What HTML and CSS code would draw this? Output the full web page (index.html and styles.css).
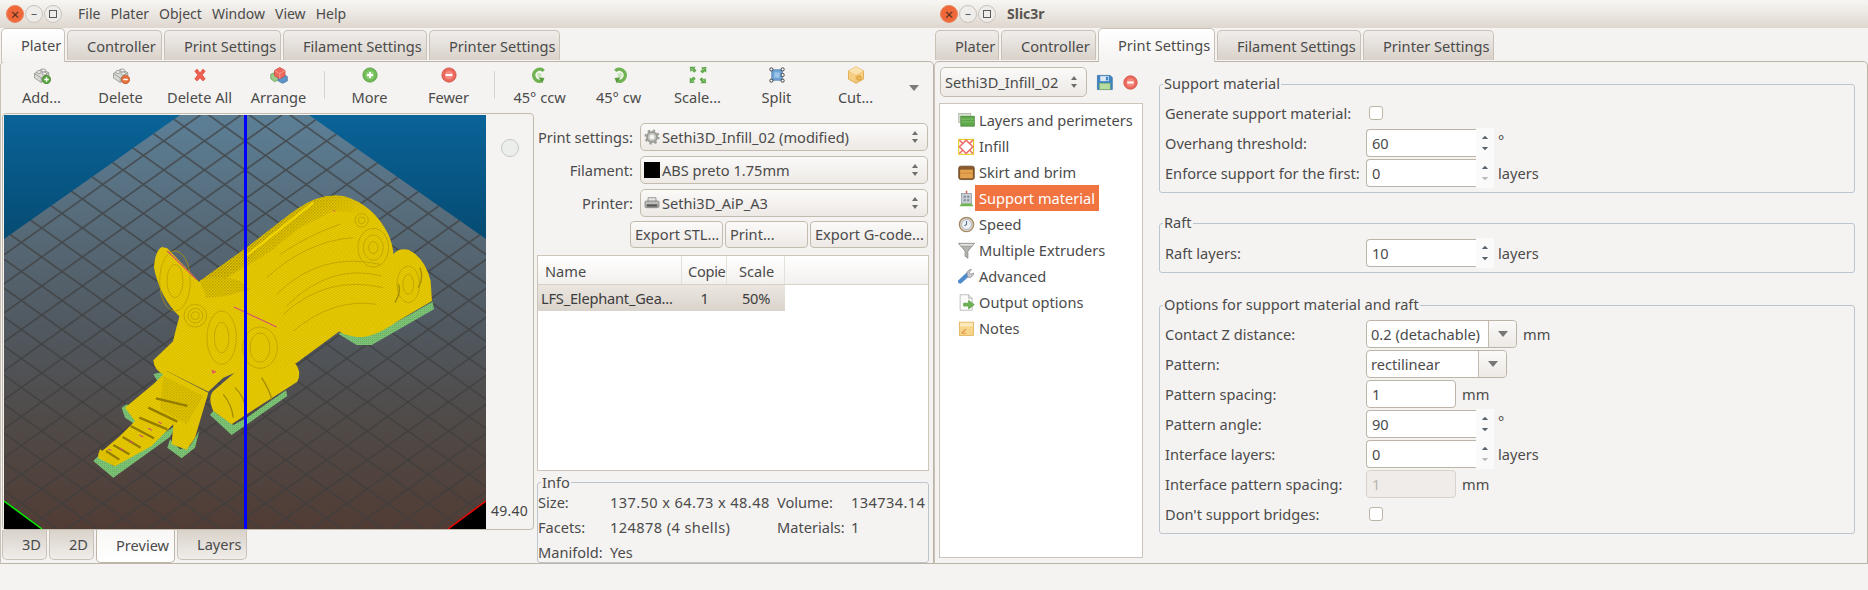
FILE: index.html
```html
<!DOCTYPE html>
<html lang="en">
<head>
<meta charset="utf-8">
<title>Slic3r</title>
<link rel="stylesheet" href="styles.css">
</head>
<body>
<svg class="defs" xmlns="http://www.w3.org/2000/svg">
  <symbol id="i-brick" viewBox="0 0 24 24"><path d="M2 10 12 4l9 5v7l-10 6-9-6z" fill="#d9d9d5" stroke="#8b8b87"/><path d="M2 10l9 6 10-7M11 16v6" fill="none" stroke="#8b8b87"/><ellipse cx="8" cy="8" rx="3" ry="2" fill="#efefec" stroke="#8b8b87"/><ellipse cx="14" cy="6" rx="3" ry="2" fill="#efefec" stroke="#8b8b87"/><ellipse cx="15" cy="10" rx="3" ry="2" fill="#efefec" stroke="#8b8b87"/></symbol>
  <symbol id="i-add" viewBox="0 0 24 24"><use href="#i-brick"/><circle cx="18" cy="18" r="5.5" fill="#58a83e" stroke="#3e7d2b"/><path d="M15 18h6M18 15v6" stroke="#fff" stroke-width="2"/></symbol>
  <symbol id="i-del" viewBox="0 0 24 24"><use href="#i-brick"/><circle cx="18" cy="18" r="5.5" fill="#e8703a" stroke="#b9502a"/><path d="M15 18h6" stroke="#fff" stroke-width="2"/></symbol>
  <symbol id="i-x" viewBox="0 0 24 24"><path d="M5 7l3-3 4 5 4-5 3 3-4 5 4 5-3 3-4-4-4 4-3-3 4-5z" fill="#ee5f52" stroke="#d8463c" stroke-width=".8"/></symbol>
  <symbol id="i-arrange" viewBox="0 0 24 24"><path d="M1 11l7-3 4 3v7l-6 3-5-4z" fill="#9ccb8a" stroke="#5f9a4f"/><path d="M11 14l6-3 6 3v6l-6 3-6-3z" fill="#5f94c8" stroke="#3d6f9f"/><path d="M6 6l7-4 7 4v7l-7 4-7-4z" fill="#ee6a5f" stroke="#c8463c"/><path d="M6 6l7 4 7-4M13 10v7" fill="none" stroke="#f6a49c"/></symbol>
  <symbol id="i-more" viewBox="0 0 24 24"><circle cx="12" cy="12" r="9.5" fill="#72bd58" stroke="#4f983c"/><circle cx="12" cy="12" r="5.5" fill="#92d07c"/><path d="M8 12h8M12 8v8" stroke="#fff" stroke-width="2.6"/></symbol>
  <symbol id="i-fewer" viewBox="0 0 24 24"><circle cx="12" cy="12" r="9.5" fill="#ec6a5c" stroke="#c9473b"/><circle cx="12" cy="12" r="5.5" fill="#f38d80"/><path d="M7.5 12h9" stroke="#fff" stroke-width="2.8"/></symbol>
  <symbol id="i-ccw" viewBox="0 0 24 24"><path d="M17 6.5A8 8 0 1 0 14 20" fill="none" stroke="#6fb352" stroke-width="4.5"/><path d="M10 15l8 1-3 7z" fill="#5a9c40"/><circle cx="11" cy="12" r="3" fill="#c6e6b8"/></symbol>
  <symbol id="i-cw" viewBox="0 0 24 24"><path d="M7 6.5A8 8 0 1 1 10 20" fill="none" stroke="#6fb352" stroke-width="4.5"/><path d="M14 15l-8 1 3 7z" fill="#5a9c40"/><circle cx="13" cy="12" r="3" fill="#c6e6b8"/></symbol>
  <symbol id="i-scale" viewBox="0 0 24 24"><path d="M1 1h8L7 3l3 3-3 3-3-3-2 2zM23 1v8l-2-2-3 3-3-3 3-3-2-2zM1 23v-8l2 2 3-3 3 3-3 3 2 2zM23 23h-8l2-2-3-3 3-3 3 3 2-2z" fill="#5fa84a"/><path d="M3 3l3 3M21 21l-3-3M21 3l-3 3M3 21l3-3" stroke="#b6dfa6"/></symbol>
  <symbol id="i-split" viewBox="0 0 24 24"><path d="M5 5h14v14H5z" fill="#6fa3d6" stroke="#4c7fb1"/><path d="M9 8l7 1-1 7-7-1z" fill="#9cc4e8"/><g fill="#fff" stroke="#111"><rect x="2.5" y="2.500" width="4" height="4" rx="1.500"/><rect x="17.500" y="2.500" width="4" height="4" rx="1.500"/><rect x="2.500" y="17.500" width="4" height="4" rx="1.500"/><rect x="17.500" y="17.500" width="4" height="4" rx="1.500"/><rect x="17.500" y="10" width="4" height="4" rx="1.500"/></g></symbol>
  <symbol id="i-cut" viewBox="0 0 24 24"><path d="M12 1l10 5.500v11L12 23 2 17.500v-11z" fill="#f5cf83" stroke="#dd9f3a"/><path d="M2 6.500L12 12l10-5.500M12 12v11" fill="none" stroke="#e9b45c"/><path d="M12 1l10 5.500L12 12 2 6.500z" fill="#fbe2ae"/><circle cx="16" cy="16" r="3" fill="#eebc54" stroke="#cf8f2c"/></symbol>
  <symbol id="i-gear" viewBox="0 0 24 24"><circle cx="12" cy="12" r="7.500" fill="#c9c9c5" stroke="#9a9a96" stroke-width="3"/><circle cx="12" cy="12" r="9.800" fill="none" stroke="#9a9a96" stroke-width="3" stroke-dasharray="3.500 4.200"/><circle cx="12" cy="12" r="3.500" fill="#f4f4f2"/></symbol>
  <symbol id="i-printer" viewBox="0 0 24 24"><path d="M6 4h12v6H6z" fill="#e4e4e1" stroke="#777"/><rect x="1.500" y="9" width="21" height="10" rx="2" fill="#bdbdb9" stroke="#666"/><rect x="4" y="14" width="16" height="3.500" fill="#555"/></symbol>
  <symbol id="i-save" viewBox="0 0 24 24"><path d="M2 2h18l3 3v17H2z" fill="#3f85c6" stroke="#2e6ba6"/><rect x="6" y="3" width="12" height="7" fill="#dbe9f5"/><rect x="14" y="4" width="3" height="5" fill="#3f85c6"/><rect x="5" y="13" width="15" height="9" fill="#b6dca0" stroke="#7cae63"/></symbol>
  <symbol id="i-layers" viewBox="0 0 24 24"><rect x="1" y="2" width="17" height="13" fill="#d7dfd0" stroke="#a2ad9a"/><rect x="4" y="6" width="19" height="14" fill="#5fa84a" stroke="#3f8030"/><path d="M4 10h19M4 14h19" stroke="#8cc678"/></symbol>
  <symbol id="i-infill" viewBox="0 0 24 24"><rect x="1" y="2" width="21" height="21" fill="#fff" stroke="#e3cb12" stroke-width="1.500"/><path d="M11.500 3l9.500 9.500-9.500 9.500L2 12.500z" fill="none" stroke="#ee6a66" stroke-width="2"/><path d="M2 3l5 5M21 3l-5 5M2 22l5-5M21 22l-5-5" stroke="#ee6a66" stroke-width="2"/></symbol>
  <symbol id="i-skirt" viewBox="0 0 24 24"><rect x="1" y="3" width="22" height="19" rx="3" fill="#8a5a2c" stroke="#5d3a18"/><rect x="3" y="8" width="18" height="12" fill="#e2a24f"/><path d="M3 13h18" stroke="#c98436"/></symbol>
  <symbol id="i-support" viewBox="0 0 24 24"><rect x="5" y="5" width="14" height="15" fill="#c9ced6" stroke="#8b93a0"/><path d="M8 8h3v3H8zM13 8h3v3h-3zM8 13h3v3H8zM13 13h3v3h-3z" fill="#7f8b9b"/><path d="M12 1v4" stroke="#d8584f" stroke-width="2"/><path d="M2 23l3-4h14l3 4z" fill="#6fb352"/></symbol>
  <symbol id="i-speed" viewBox="0 0 24 24"><circle cx="12" cy="12" r="10" fill="#e6dfd2" stroke="#a58a68" stroke-width="2"/><circle cx="12" cy="12" r="7" fill="#eef1f4" stroke="#8fa1b3"/><path d="M12 7v5l-3 2" fill="none" stroke="#4e6d8c" stroke-width="1.500"/></symbol>
  <symbol id="i-funnel" viewBox="0 0 24 24"><path d="M1 2h22l-9 11v10l-4-3v-7z" fill="#b4b4b0" stroke="#7c7c78"/><path d="M1 2h22l-3 4H4z" fill="#e4e4e1" stroke="#8c8c88"/></symbol>
  <symbol id="i-wrench" viewBox="0 0 24 24"><path d="M3 19L14 9" stroke="#4f8ccb" stroke-width="6" stroke-linecap="round"/><path d="M13 10a6 6 0 0 1 6-8l-3 4 2 3 4-2a6 6 0 0 1-8 6z" fill="#c7c9cc" stroke="#86888c"/></symbol>
  <symbol id="i-output" viewBox="0 0 24 24"><path d="M3 1h12l5 5v17H3z" fill="#fbfbfa" stroke="#a9a9a5"/><path d="M15 1v5h5" fill="#e5e5e2" stroke="#a9a9a5"/><path d="M8 13h7V9l8 6-8 6v-4H8z" fill="#6fb352" stroke="#4f983c"/></symbol>
  <symbol id="i-notes" viewBox="0 0 24 24"><rect x="2" y="3" width="20" height="19" fill="#f6d58b" stroke="#dfa74a"/><rect x="3" y="4" width="18" height="5" fill="#fbe9bd"/><path d="M5 19l6-6M11 19l-6-1" stroke="#df8f3a" stroke-width="1.500" fill="none"/></symbol>
  <symbol id="i-updown" viewBox="0 0 10 16"><path d="M5 2l3 4H2zM5 14l3-4H2z" fill="#6f6f6b"/></symbol>
  <symbol id="i-spin" viewBox="0 0 10 22"><path d="M5 2l4 4H1z" fill="#59636d"/><path d="M5 20l4-4H1z" fill="#59636d"/></symbol>
  <symbol id="i-spin-off" viewBox="0 0 10 22"><path d="M5 2l4 4H1z" fill="#59636d"/><path d="M5 20l4-4H1z" fill="#b9b9b5"/></symbol>
</svg>

<main class="desktop">
  <section class="window">
    <header class="titlebar">
      <div class="winbtns">
        <span class="winbtn winbtn-close">×</span><span class="winbtn">–</span><span class="winbtn"><i class="maxbox"></i></span>
      </div>
      <nav class="menubar"><span>File</span><span>Plater</span><span>Object</span><span>Window</span><span>View</span><span>Help</span></nav>
    </header>
    <div class="tabs">
      <span class="tab active w-plater">Plater</span>
      <span class="tab w-controller">Controller</span>
      <span class="tab w-print">Print Settings</span>
      <span class="tab w-filament">Filament Settings</span>
      <span class="tab w-printer">Printer Settings</span>
    </div>
    <div class="panel plater">
      <div class="toolbar">
        <div class="tool"><svg class="tool-icon"><use href="#i-add"/></svg>Add...</div>
        <div class="tool"><svg class="tool-icon"><use href="#i-del"/></svg>Delete</div>
        <div class="tool"><svg class="tool-icon"><use href="#i-x"/></svg>Delete All</div>
        <div class="tool"><svg class="tool-icon"><use href="#i-arrange"/></svg>Arrange</div>
        <div class="tool-sep"></div>
        <div class="tool"><svg class="tool-icon"><use href="#i-more"/></svg>More</div>
        <div class="tool"><svg class="tool-icon"><use href="#i-fewer"/></svg>Fewer</div>
        <div class="tool-sep"></div>
        <div class="tool"><svg class="tool-icon"><use href="#i-ccw"/></svg>45° ccw</div>
        <div class="tool"><svg class="tool-icon"><use href="#i-cw"/></svg>45° cw</div>
        <div class="tool"><svg class="tool-icon"><use href="#i-scale"/></svg>Scale...</div>
        <div class="tool"><svg class="tool-icon"><use href="#i-split"/></svg>Split</div>
        <div class="tool"><svg class="tool-icon"><use href="#i-cut"/></svg>Cut...</div>
        <span class="tool-more"></span>
      </div>
      <div class="plater-body">
        <div class="plater-left">
          <div class="preview">
            <svg class="scene" viewBox="0 0 482 414" xmlns="http://www.w3.org/2000/svg">
              <defs>
                <linearGradient id="sky" x1="0" y1="0" x2="0" y2="1"><stop offset="0" stop-color="#0a6398"/><stop offset=".32" stop-color="#054a70"/><stop offset="1" stop-color="#04344f"/></linearGradient>
                <linearGradient id="plate" gradientUnits="userSpaceOnUse" x1="0" y1="0" x2="0" y2="414"><stop offset="0" stop-color="#5c7f96"/><stop offset=".3" stop-color="#566875"/><stop offset=".55" stop-color="#50565c"/><stop offset=".78" stop-color="#504844"/><stop offset="1" stop-color="#513c35"/></linearGradient>
                <pattern id="grid" patternUnits="userSpaceOnUse" width="40.700" height="29" x="-3" y="-3">
                  <path d="M0 0L40.700 29M40.700 0L0 29" stroke="#3d3d3d" stroke-opacity=".72" stroke-width="1.700" fill="none"/>
                </pattern>
                <pattern id="tex" patternUnits="userSpaceOnUse" width="6" height="6" patternTransform="rotate(-35)">
                  <rect width="6" height="6" fill="#ebce00"/><rect width="6" height="2.200" fill="#d2b500"/>
                </pattern>
                <pattern id="tex2" patternUnits="userSpaceOnUse" width="6" height="6" patternTransform="rotate(30)">
                  <rect width="6" height="6" fill="#ebce00"/><rect width="6" height="2.200" fill="#d0b300"/>
                </pattern>
                <pattern id="tex3" patternUnits="userSpaceOnUse" width="9" height="9">
                  <rect width="9" height="9" fill="#e2c500"/><rect width="4.500" height="4.500" fill="#a08900"/><rect x="4.500" y="4.500" width="4.500" height="4.500" fill="#b59c00"/>
                </pattern>
                <pattern id="raft" patternUnits="userSpaceOnUse" width="6" height="6">
                  <rect width="6" height="6" fill="#7cc274"/><rect width="3" height="3" fill="#69ad64"/>
                </pattern>
                <linearGradient id="backfade" gradientUnits="userSpaceOnUse" x1="600" y1="60" x2="700" y2="190"><stop offset="0" stop-color="#fff" stop-opacity="1"/><stop offset="1" stop-color="#fff" stop-opacity="0"/></linearGradient>
                <mask id="backmask"><rect x="300" width="700" height="500" fill="url(#backfade)"/></mask>
              </defs>
              <rect width="482" height="414" fill="url(#sky)"/>
              <path d="M176 0H305L482 124V386L444 414H38L0 386V124z" fill="url(#plate)"/>
              <path d="M176 0H305L482 124V386L444 414H38L0 386V124z" fill="url(#grid)"/>
              <path d="M0 386L38 414H0z" fill="#000"/>
              <path d="M0 386L38 414" stroke="#00f000" stroke-width="1.500"/>
              <path d="M482 386L444 414H482z" fill="#000"/>
              <path d="M482 386L444 414" stroke="#f00000" stroke-width="1.500"/>
              <g transform="translate(76 76) scale(.3333)">
                <g fill="url(#raft)">
                  <path d="M775 428L830 462L875 462L1062 355L1058 332L1000 365L880 430L800 418z"/>
                  <path d="M390 672L455 732L622 615L618 598L500 680L460 702L400 660z"/>
                  <path d="M40 810L100 860L270 738L292 700L240 735L100 825L60 790z"/>
                  <path d="M125 650L135 680L165 700L195 670L140 640z"/>
                  <path d="M220 550L235 575L260 548L235 545z"/>
                  <path d="M262 770L305 802L345 770L358 720L330 765L300 775L270 745z"/>
                </g>
                <path d="M940 190Q955 170 985 176Q1035 200 1052 270L1056 330L950 392Q880 442 830 438Q790 430 778 422L850 340z" fill="url(#tex2)"/>
                <path d="M245 168L262 172L355 270L366 290L300 378Q240 320 222 230Q225 180 245 168z" fill="url(#tex)"/>
                <path d="M280 450L220 508Q222 540 255 552L290 485z" fill="url(#tex2)"/>
                <path d="M500 530L640 510Q668 540 652 572L570 625L500 670L455 700L400 660Q382 620 400 600L470 540z" fill="url(#tex)"/>
                <path d="M360 270L500 170L650 55Q720 5 790 15Q880 40 925 130Q952 190 935 260L900 310L800 405L650 515L600 532L500 540L450 480L360 400z" fill="url(#tex2)"/>
                <path d="M360 270L500 170L650 55Q720 5 790 15Q840 25 880 70L760 60L660 110L560 190L500 225L440 262z" fill="url(#tex3)" mask="url(#backmask)"/>
                <path d="M360 270L500 170L640 60L500 215L440 262z" fill="url(#tex3)" opacity=".55"/>
                <path d="M498 195L700 35" stroke="#f2d500" stroke-width="7"/>
                <path d="M500 270Q560 310 606 420Q590 480 520 532L500 520z" fill="url(#tex)"/>
                <path d="M360 270Q420 250 480 270L500 285L500 530L430 560L385 602L260 540Q280 440 300 370Q320 300 360 270z" fill="url(#tex)"/>
                <path d="M360 272Q420 250 480 270L510 295L440 315L380 320z" fill="url(#tex3)" opacity=".6"/>
                <path d="M260 540L225 575L135 650L165 690L120 735L55 790L55 802L105 826L215 765L280 700L275 760L320 776L345 740L385 605z" fill="url(#tex2)"/>
                <path d="M250 555L370 615L320 700L240 655z" fill="url(#tex3)" opacity=".45"/>
                <path d="M55 790L105 826L112 808L60 775z" fill="#dcbf00"/>
                <g fill="none" stroke="#b59b00" stroke-width="3" opacity=".7">
                  <circle cx="346" cy="374" r="12"/><circle cx="346" cy="374" r="22"/><circle cx="346" cy="374" r="34"/>
                  <ellipse cx="880" cy="170" rx="14" ry="18"/><ellipse cx="880" cy="170" rx="30" ry="38"/><ellipse cx="880" cy="170" rx="46" ry="58"/>
                  <ellipse cx="845" cy="88" rx="10" ry="10"/><ellipse cx="845" cy="88" rx="20" ry="20"/>
                  <ellipse cx="540" cy="470" rx="30" ry="44"/><ellipse cx="540" cy="470" rx="52" ry="62"/>
                  <ellipse cx="425" cy="440" rx="22" ry="46"/><ellipse cx="425" cy="440" rx="44" ry="80"/>
                  <ellipse cx="985" cy="280" rx="16" ry="30"/><ellipse cx="985" cy="280" rx="34" ry="55"/>
                  <ellipse cx="285" cy="270" rx="24" ry="50"/><ellipse cx="285" cy="270" rx="46" ry="90"/>
                  <path d="M590 310Q720 180 900 220M610 370Q740 250 910 290M640 420Q760 320 890 340M600 190Q690 130 780 100M560 260Q680 150 820 140M620 345Q750 215 905 255"/>
                </g>
                <g fill="none" stroke="#937c00" stroke-width="7">
                  <path d="M228 622L322 645M205 650L292 692M178 680L262 715M152 705L222 742M128 738L182 770M100 762L148 790M78 780L118 806"/>
                </g>
                <g fill="none" stroke="#a48c00" stroke-width="4">
                  <path d="M945 335Q965 300 955 280M1015 290Q1032 260 1020 230M545 560Q570 600 575 625M465 590Q495 620 495 650M430 610Q455 640 460 680"/>
                </g>
                <g fill="none" stroke="#d4536e" stroke-width="3.500">
                  <path d="M262 180L350 266M462 348L590 408M120 772L132 778M150 750L160 756M178 732L190 738M205 712L216 718M235 692L245 698M85 775L95 778M760 58L765 62"/>
                </g>
                <path d="M395 536L410 542L398 548z" fill="#e0506a"/>
              </g>
              <rect x="240" y="0" width="3" height="414" fill="#0000ff"/>
            </svg>
            <div class="preview-side">
              <span class="slider-knob"></span>
              <span class="z-value">49.40</span>
            </div>
          </div>
          <div class="tabs-bottom">
            <span class="btab w-3d">3D</span>
            <span class="btab w-2d">2D</span>
            <span class="btab active w-preview">Preview</span>
            <span class="btab w-layers">Layers</span>
          </div>
        </div>
        <aside class="plater-right">
          <div class="selectors">
            <label class="sel-label">Print settings:</label>
            <div class="combo"><svg class="combo-icon"><use href="#i-gear"/></svg>Sethi3D_Infill_02 (modified)<svg class="updown"><use href="#i-updown"/></svg></div>
            <label class="sel-label">Filament:</label>
            <div class="combo"><span class="swatch"></span>ABS preto 1.75mm<svg class="updown"><use href="#i-updown"/></svg></div>
            <label class="sel-label">Printer:</label>
            <div class="combo"><svg class="combo-icon"><use href="#i-printer"/></svg>Sethi3D_AiP_A3<svg class="updown"><use href="#i-updown"/></svg></div>
          </div>
          <div class="actions">
            <span class="btn w-stl">Export STL...</span>
            <span class="btn w-printbtn">Print...</span>
            <span class="btn w-gcode">Export G-code...</span>
          </div>
          <div class="objects">
            <div class="objects-head">
              <span class="col col-name">Name</span><span class="col col-copies">Copie</span><span class="col col-scale">Scale</span>
            </div>
            <div class="objects-row">
              <span class="cell col-name">LFS_Elephant_Gea...</span><span class="cell col-copies center">1</span><span class="cell col-scale center">50%</span>
            </div>
          </div>
          <fieldset class="info">
            <legend>Info</legend>
            <div class="info-grid">
              <span>Size:</span><span class="num">137.50 x 64.73 x 48.48</span><span>Volume:</span><span class="num">134734.14</span>
              <span>Facets:</span><span class="num">124878 (4 shells)</span><span>Materials:</span><span class="num">1</span>
              <span>Manifold:</span><span>Yes</span>
            </div>
          </fieldset>
        </aside>
      </div>
    </div>
  </section>

  <section class="window window-right">
    <header class="titlebar">
      <div class="winbtns">
        <span class="winbtn winbtn-close">×</span><span class="winbtn">–</span><span class="winbtn"><i class="maxbox"></i></span>
      </div>
      <strong class="apptitle">Slic3r</strong>
    </header>
    <div class="tabs">
      <span class="tab w-plater">Plater</span>
      <span class="tab w-controller">Controller</span>
      <span class="tab active w-print">Print Settings</span>
      <span class="tab w-filament">Filament Settings</span>
      <span class="tab w-printer">Printer Settings</span>
    </div>
    <div class="panel settings">
      <aside class="sidebar">
        <div class="preset-row">
          <div class="combo preset">Sethi3D_Infill_02<svg class="updown"><use href="#i-updown"/></svg></div>
          <svg class="preset-icon"><use href="#i-save"/></svg>
          <svg class="preset-icon"><use href="#i-fewer"/></svg>
        </div>
        <ul class="tree">
          <li><svg class="tree-icon"><use href="#i-layers"/></svg><span>Layers and perimeters</span></li>
          <li><svg class="tree-icon"><use href="#i-infill"/></svg><span>Infill</span></li>
          <li><svg class="tree-icon"><use href="#i-skirt"/></svg><span>Skirt and brim</span></li>
          <li><svg class="tree-icon"><use href="#i-support"/></svg><span class="selected">Support material</span></li>
          <li><svg class="tree-icon"><use href="#i-speed"/></svg><span>Speed</span></li>
          <li><svg class="tree-icon"><use href="#i-funnel"/></svg><span>Multiple Extruders</span></li>
          <li><svg class="tree-icon"><use href="#i-wrench"/></svg><span>Advanced</span></li>
          <li><svg class="tree-icon"><use href="#i-output"/></svg><span>Output options</span></li>
          <li><svg class="tree-icon"><use href="#i-notes"/></svg><span>Notes</span></li>
        </ul>
      </aside>
      <div class="options">
        <fieldset class="group">
          <legend>Support material</legend>
          <div class="row"><span>Generate support material:</span><div class="ctl"><span class="check"></span></div></div>
          <div class="row"><span>Overhang threshold:</span><div class="ctl"><span class="input spin">60</span><span class="spinner"><svg class="spin-arrows"><use href="#i-spin"/></svg></span><span class="unit unit-deg">°</span></div></div>
          <div class="row"><span>Enforce support for the first:</span><div class="ctl"><span class="input spin">0</span><span class="spinner"><svg class="spin-arrows"><use href="#i-spin-off"/></svg></span><span class="unit">layers</span></div></div>
        </fieldset>
        <fieldset class="group group-raft">
          <legend>Raft</legend>
          <div class="row"><span>Raft layers:</span><div class="ctl"><span class="input spin">10</span><span class="spinner"><svg class="spin-arrows"><use href="#i-spin"/></svg></span><span class="unit">layers</span></div></div>
        </fieldset>
        <fieldset class="group group-options">
          <legend>Options for support material and raft</legend>
          <div class="row"><span>Contact Z distance:</span><div class="ctl"><span class="drop w-contact"><span class="drop-text">0.2 (detachable)</span><span class="drop-btn"></span></span><span class="unit unit-tight">mm</span></div></div>
          <div class="row"><span>Pattern:</span><div class="ctl"><span class="drop w-pattern"><span class="drop-text">rectilinear</span><span class="drop-btn"></span></span></div></div>
          <div class="row"><span>Pattern spacing:</span><div class="ctl"><span class="input short">1</span><span class="unit unit-tight">mm</span></div></div>
          <div class="row"><span>Pattern angle:</span><div class="ctl"><span class="input spin">90</span><span class="spinner"><svg class="spin-arrows"><use href="#i-spin"/></svg></span><span class="unit unit-deg">°</span></div></div>
          <div class="row"><span>Interface layers:</span><div class="ctl"><span class="input spin">0</span><span class="spinner"><svg class="spin-arrows"><use href="#i-spin-off"/></svg></span><span class="unit">layers</span></div></div>
          <div class="row"><span>Interface pattern spacing:</span><div class="ctl"><span class="input short disabled">1</span><span class="unit unit-tight">mm</span></div></div>
          <div class="row"><span>Don't support bridges:</span><div class="ctl"><span class="check"></span></div></div>
        </fieldset>
      </div>
    </div>
  </section>
</main>
</body>
</html>
```

FILE: styles.css
```css
* { box-sizing: border-box; }
html, body { margin: 0; height: 590px; overflow: hidden; }
body {
  background: #f5f3f1;
  color: #4b4b4b;
  font: 14.6px/20px "Noto Sans", "Open Sans", sans-serif;
}
.defs { display: none; }
.desktop { display: flex; }

/* window */
.window { width: 934px; height: 564px; display: flex; flex-direction: column; }
.titlebar {
  height: 28px;
  display: flex;
  align-items: center;
  background: linear-gradient(#f8f6f3, #ded7cf);
  border-radius: 6px 6px 0 0;
  font-size: 14px;
}
.winbtns { display: flex; gap: 1px; padding-left: 6px; width: 68px; flex: none; }
.winbtn {
  width: 18px; height: 18px;
  border-radius: 50%;
  border: 1px solid #c7c2ba;
  background: #efedea;
  color: #5a5a5a;
  display: flex; align-items: center; justify-content: center;
  font-size: 12px; line-height: 1;
}
.winbtn-close { background: #f0683a; border-color: #e8845c; color: #52301f; font-size: 15px; }
.maxbox { width: 8px; height: 8px; border: 1px solid #5a5a5a; }
.menubar { display: flex; gap: 10px; padding-left: 10px; }
.apptitle { color: #5a5650; font-weight: 700; padding-left: 5px; }

/* top tabs */
.tabs { height: 33px; display: flex; align-items: flex-end; gap: 2px; padding-left: 1px; flex: none; }
.tab {
  height: 30px;
  margin-bottom: 1px;
  padding: 5px 0 0 19px;
  white-space: nowrap;
  border: 1px solid #c9c1b6;
  border-bottom: 0;
  border-radius: 5px 5px 0 0;
  background: linear-gradient(#f0edea, #d9d2ca);
  flex: none;
}
.tab.active {
  height: 34px;
  margin-bottom: -1px;
  padding-top: 6px;
  background: linear-gradient(#fff, #f5f3f1);
  position: relative;
  z-index: 1;
}
.w-plater { width: 64px; }
.w-controller { width: 95px; }
.w-print { width: 117px; }
.w-filament { width: 144px; }
.w-printer { width: 131px; }

.panel {
  flex: 1;
  border: 1px solid #bdb4a8;
  border-radius: 5px 5px 0 0;
  border-left-color: #c9c1b6;
}

/* toolbar */
.plater { display: flex; flex-direction: column; }
.toolbar { height: 51px; display: flex; padding-left: 1px; flex: none; }
.tool {
  width: 79px;
  flex: none;
  display: flex; flex-direction: column; align-items: center;
  padding-top: 4px;
  white-space: nowrap;
}
.tool-icon { width: 18px; height: 18px; margin-bottom: 3px; }
.tool-sep { width: 12px; flex: none; }
.tool-sep::after { content: ""; display: block; width: 1px; height: 28px; margin: 9px auto 0; background: #d9d4cd; }
.tool-more {
  width: 0; height: 0;
  margin: 23px 0 0 14px;
  border: 5px solid transparent;
  border-top: 6px solid #7c7c78;
  border-bottom: 0;
}

.plater-body { flex: 1; display: flex; min-height: 0; }
.plater-left { width: 533px; flex: none; padding-left: 1px; }
.preview {
  height: 417px;
  display: flex;
  border: 1px solid #c4bbaf;
  border-radius: 4px;
  padding: 1px 0 1px 1px;
  background: #f5f3f1;
}
.scene { width: 482px; height: 414px; display: block; flex: none; }
.preview-side {
  flex: 1;
  display: flex; flex-direction: column; align-items: center; justify-content: space-between;
  padding: 24px 0 7px;
}
.slider-knob { width: 18px; height: 18px; border-radius: 50%; border: 1px solid #c5c8c6; background: #eceeec; }
.z-value { color: #444; font-size: 14px; letter-spacing: .2px; }

.tabs-bottom { display: flex; gap: 2px; align-items: flex-start; }
.btab {
  height: 30px;
  padding: 4px 0 0 19px;
  border: 1px solid #c9c1b6;
  border-top: 0;
  border-radius: 0 0 5px 5px;
  background: linear-gradient(#d9d2ca, #f0edea);
}
.btab.active { height: 33px; padding-top: 5px; background: linear-gradient(#f8f7f5, #fff); border-color: #bdb4a8; }
.w-3d { width: 45px; }
.w-2d { width: 45px; }
.w-preview { width: 79px; }
.w-layers { width: 70px; }

/* right column of the plater */
.plater-right { width: 394px; flex: none; padding: 10px 0 0 3px; }
.selectors { display: grid; grid-template-columns: 96px 288px; column-gap: 7px; row-gap: 5px; align-items: center; }
.sel-label { text-align: right; white-space: nowrap; }
.combo {
  height: 28px;
  display: flex; align-items: center;
  padding-left: 3px;
  border: 1px solid #c4bbaf;
  border-radius: 5px;
  background: linear-gradient(#fbfaf9, #ede9e5);
  white-space: nowrap;
}
.combo-icon { width: 16px; height: 16px; margin-right: 2px; flex: none; }
.swatch { width: 16px; height: 16px; background: #000; margin-right: 2px; flex: none; }
.updown { width: 10px; height: 16px; margin-left: auto; margin-right: 7px; flex: none; }
.actions { display: flex; gap: 2px; padding-left: 93px; margin-top: 4px; }
.btn {
  height: 27px;
  padding: 2px 0 0 4px;
  white-space: nowrap;
  border: 1px solid #c4bbaf;
  border-radius: 4px;
  background: linear-gradient(#fbfaf9, #ede9e5);
}
.w-stl { width: 93px; }
.w-printbtn { width: 83px; }
.w-gcode { width: 118px; }
.objects { width: 392px; height: 216px; margin-top: 7px; background: #fff; border: 1px solid #cdc5ba; }
.objects-head { display: flex; height: 29px; border-bottom: 1px solid #d8d2ca; background: linear-gradient(#fff, #f3f1ee); align-items: center; }
.objects-row { display: flex; height: 26px; width: 247px; align-items: center; background: linear-gradient(#ebe6e0, #dad4cc); color: #3c3c3c; }
.col-name { width: 144px; }
.col-copies { width: 45px; }
.col-scale { width: 58px; }
.col { height: 100%; display: flex; align-items: center; padding: 2px 0 0 7px; border-right: 1px solid #e4e0da; overflow: hidden; white-space: nowrap; }
.col-copies.col { padding-left: 6px; letter-spacing: -.3px; }
.col-scale.col { padding-left: 12px; }
.cell { white-space: nowrap; padding-left: 3px; overflow: hidden; letter-spacing: -.2px; }
.center { text-align: center; padding-left: 0; }

fieldset { margin: 0; padding: 0; min-width: 0; border: 1px solid #bcc4cd; border-radius: 3px; }
legend { padding: 0 1px; margin-left: 3px; line-height: 18px; }
.info { width: 392px; height: 89px; margin-top: 3px; }
.info legend { line-height: 16px; }
.info-grid { display: grid; grid-template-columns: 72px 167px 74px 1fr; grid-auto-rows: 20px; row-gap: 5px; padding-top: 2px; white-space: nowrap; }
.num { letter-spacing: .4px; }

/* settings window */
.settings { display: flex; padding: 5px 0 0 4px; gap: 16px; }
.sidebar { width: 204px; flex: none; display: flex; flex-direction: column; }
.preset-row { display: flex; align-items: center; padding-left: 1px; height: 30px; }
.preset { width: 147px; height: 30px; padding-left: 4px; flex: none; }
.preset-icon { width: 17px; height: 17px; margin-left: 9px; flex: none; }
.tree { list-style: none; margin: 6px 0 0; padding: 3px 0 0; height: 455px; background: #fff; border: 1px solid #cdc5ba; }
.tree li { height: 26px; display: flex; align-items: center; padding-left: 18px; white-space: nowrap; }
.tree-icon { width: 17px; height: 17px; flex: none; }
.tree span { padding: 0 4px 0 4px; line-height: 26px; }
.tree .selected { background: #f1733f; color: #fff; }

.options { width: 696px; flex: none; margin-top: 8px; }
.group { padding: 6px 5px 5px; }
.group-raft { margin-top: 21px; padding-top: 7px; }
.group-options { margin-top: 23px; padding-top: 6px; }
.group legend { margin-left: -2px; padding: 0 1px 2px; line-height: 16px; }
.row { display: grid; grid-template-columns: 201px 1fr; height: 28px; align-items: center; margin-bottom: 2px; white-space: nowrap; }
.row:last-child { margin-bottom: 0; }
.ctl { display: flex; align-items: center; height: 28px; }
.check { width: 14px; height: 14px; margin-left: 3px; background: #fff; border: 1px solid #bdb4a8; border-radius: 3px; }
.input {
  height: 28px;
  padding: 3px 0 0 5px;
  background: #fff;
  border: 1px solid #bdb4a8;
  border-radius: 4px;
}
.input.spin { width: 110px; border-right: 0; border-radius: 4px 0 0 4px; }
.input.short { width: 90px; }
.input.disabled { background: #efecea; color: #b8b5b1; border-color: #d8d2ca; }
.spinner { width: 18px; height: 30px; background: #fbfafa; display: flex; align-items: center; justify-content: center; }
.spin-arrows { width: 8px; height: 18px; }
.unit { margin-left: 4px; }
.unit-tight { margin-left: 6px; }
.unit-deg { margin-top: -6px; }
.drop {
  height: 28px;
  display: flex;
  background: #fff;
  border: 1px solid #bdb4a8;
  border-radius: 4px;
}
.w-contact { width: 151px; }
.w-pattern { width: 141px; }
.drop-text { flex: 1; padding: 3px 0 0 4px; overflow: hidden; white-space: nowrap; }
.drop-btn {
  width: 28px;
  flex: none;
  border-left: 1px solid #c4bbaf;
  border-radius: 0 4px 4px 0;
  background: linear-gradient(#fbfaf9, #ede9e5);
  display: flex; align-items: center; justify-content: center;
}
.drop-btn::after { content: ""; border: 5px solid transparent; border-top: 6px solid #777; border-bottom: 0; }
```
